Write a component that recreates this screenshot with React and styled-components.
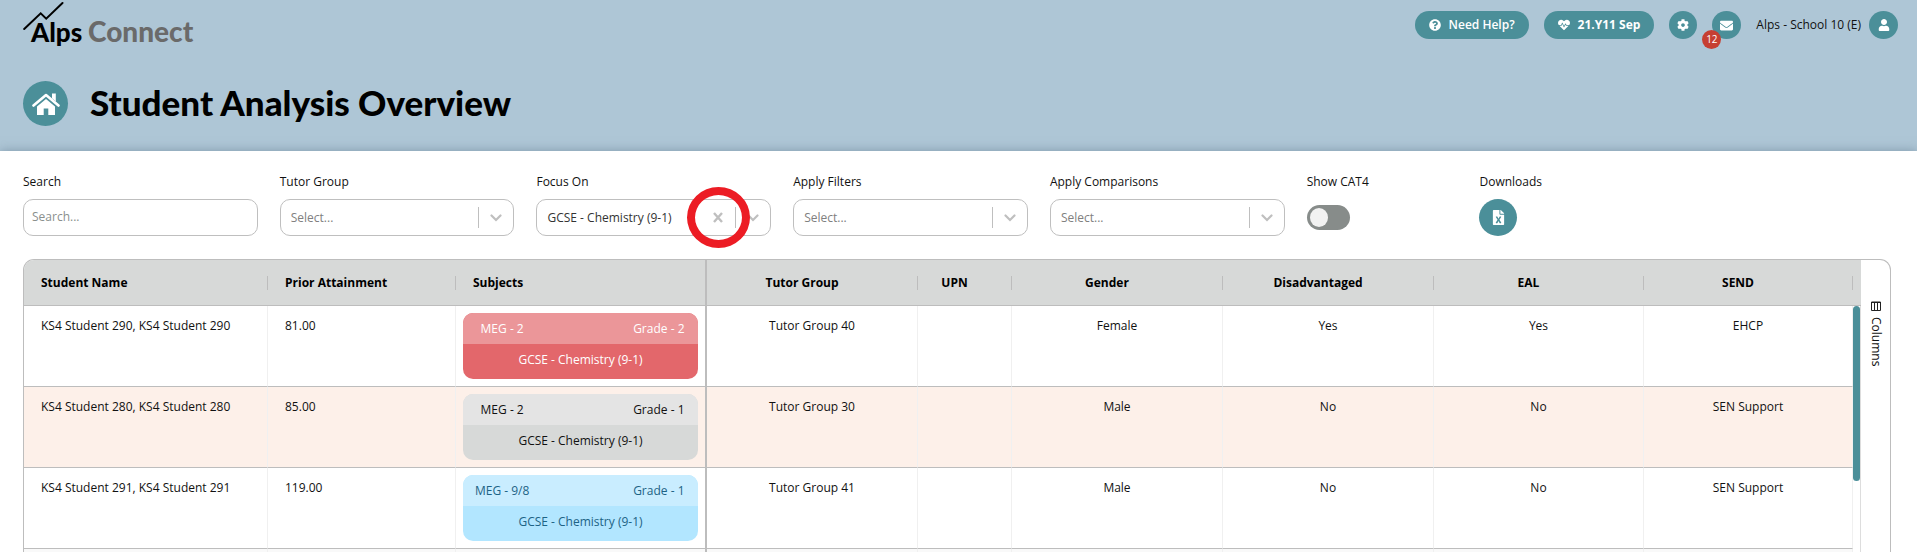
import React, { useState } from 'react';
import styled, { createGlobalStyle } from 'styled-components';
import {
    FaQuestionCircle,
    FaHeartbeat,
    FaCog,
    FaEnvelope,
    FaUser,
    FaFileExcel,
} from 'react-icons/fa';

const GlobalStyle = createGlobalStyle`
    * {
        box-sizing: border-box;
    }
    html {
        overflow: hidden;
    }
    body {
        margin: 0;
        background: #fff;
        color: #111;
        font-family: 'Open Sans', 'Noto Sans', sans-serif;
        font-size: 12px;
        line-height: 18px;
    }
    button, input, select {
        font: inherit;
        color: inherit;
    }
`;

const Header = styled.header`
    height: 151px;
    padding: 0 19px 0 23px;
    background: #aec6d6;
`;

const TopBar = styled.div`
    display: flex;
    justify-content: space-between;
    height: 50px;
`;

const LogoLink = styled.a`
    display: block;
    height: 50px;
`;

const TopActions = styled.nav`
    display: flex;
    align-items: center;
    gap: 15px;
    height: 28px;
    margin-top: 11px;
`;

const PillButton = styled.button`
    display: flex;
    align-items: center;
    gap: 8px;
    height: 28px;
    padding: 0 14px;
    border: none;
    border-radius: 14px;
    background: #4b8f99;
    color: #fff;
    font-weight: ${({ $bold }) => ($bold ? 700 : 600)};
    cursor: pointer;
`;

const RoundButton = styled.button`
    position: relative;
    display: flex;
    align-items: center;
    justify-content: center;
    flex-shrink: 0;
    width: ${({ $width }) => $width || 28}px;
    height: ${({ $height }) => $height || 28}px;
    padding: 0;
    border: none;
    border-radius: 50%;
    background: #4b8f99;
    color: #fff;
    cursor: pointer;
`;

const Badge = styled.span`
    position: absolute;
    top: 19px;
    left: -10px;
    width: 19px;
    height: 19px;
    border-radius: 50%;
    background: #c63f32;
    font-size: 10px;
    line-height: 18px;
    text-align: center;
`;

const Account = styled.div`
    display: flex;
    align-items: center;
    gap: 8px;
`;

const TitleRow = styled.div`
    display: flex;
    align-items: center;
    gap: 22px;
    margin-top: 31px;
`;

const HomeLink = styled.a`
    display: flex;
    align-items: center;
    justify-content: center;
    width: 45px;
    height: 45px;
    border-radius: 50%;
    background: #4b8f99;
`;

const Title = styled.h1`
    margin: 0;
    padding-bottom: 3px;
    color: #000;
    font-family: Futura, Lato, sans-serif;
    font-size: 35px;
    line-height: 42px;
    font-weight: 900;
`;

const Main = styled.main`
    padding: 22px 26px 0 23px;
    background: #fff;
    box-shadow: 0 0 10px rgba(80, 105, 125, 0.5);
`;

const Filters = styled.form`
    display: grid;
    grid-template-columns: repeat(5, minmax(0, 235fr)) 151fr 412fr;
    column-gap: 22px;
`;

const Field = styled.div`
    position: relative;
    display: flex;
    flex-direction: column;
    align-items: flex-start;
    gap: 8px;
    > label {
        height: 18px;
    }
`;

const SearchInput = styled.input`
    width: 100%;
    height: 37px;
    padding: 0 8px 2px;
    border: 1px solid #bfbfbf;
    border-radius: 10px;
    outline: none;
    &::placeholder {
        color: #8a8f8d;
        opacity: 1;
    }
`;

const SelectBox = styled.div`
    display: flex;
    align-items: center;
    width: 100%;
    height: 37px;
    border: 1px solid #bfbfbf;
    border-radius: 10px;
`;

const NativeSelect = styled.select`
    flex: 1;
    min-width: 0;
    height: 35px;
    padding: 0 0 0 10px;
    border: none;
    outline: none;
    background: transparent;
    color: ${({ $filled }) => ($filled ? '#333' : '#808080')};
    appearance: none;
`;

const ClearButton = styled.button`
    display: flex;
    justify-content: center;
    width: 35px;
    padding: 0;
    border: none;
    background: none;
    cursor: pointer;
`;

const Divider = styled.span`
    width: 1px;
    height: 21px;
    background: #bfbfbf;
`;

const Arrow = styled.span`
    display: flex;
    justify-content: center;
    width: 34px;
`;

const FocusRing = styled.span`
    position: absolute;
    top: 14px;
    right: 21px;
    width: 63px;
    height: 61px;
    border: 8px solid #ec1c24;
    border-radius: 50%;
    pointer-events: none;
`;

const ToggleInput = styled.input`
    appearance: none;
    display: flex;
    align-items: center;
    width: 43px;
    height: 25px;
    margin: 6px 0;
    padding: 0 3px;
    border-radius: 13px;
    background: #878c8a;
    cursor: pointer;
    &::before {
        content: '';
        width: 18px;
        height: 19px;
        border-radius: 50%;
        background: #f2f2f2;
    }
    &:checked {
        justify-content: flex-end;
        background: #4b8f99;
    }
`;

const Panel = styled.section`
    display: flex;
    margin-top: 23px;
    border: 1px solid #bdbdbd;
    border-bottom: none;
    border-radius: 11px 11px 0 0;
    overflow: hidden;
`;

const GridArea = styled.div`
    position: relative;
    flex: 1;
    min-width: 0;
`;

const Table = styled.table`
    width: 100%;
    table-layout: fixed;
    border-collapse: separate;
    border-spacing: 0;
`;

const Th = styled.th`
    height: 46px;
    padding: 0;
    border-bottom: 1px solid #bdbdbd;
    border-right: ${({ $pinEdge }) => ($pinEdge ? '2px solid #bdbdbd' : 'none')};
    background: #d7d9d8;
    color: #000;
    font-weight: 700;
    > div {
        height: 14px;
        line-height: 14px;
        padding: ${({ $left }) => ($left ? '0 0 0 17px' : '0 20px 0 0')};
        border-right: ${({ $pinEdge }) => ($pinEdge ? 'none' : '1px solid #bdbdbd')};
        text-align: ${({ $left }) => ($left ? 'left' : 'center')};
        white-space: nowrap;
    }
`;

const HeadGutter = styled.td`
    padding: 0;
    border-bottom: 1px solid #bdbdbd;
    background: #d7d9d8;
`;

const Row = styled.tr`
    background: ${({ $tint }) => $tint || '#fff'};
`;

const Td = styled.td`
    height: 81px;
    padding: ${({ $left }) => ($left ? '11px 0 0 17px' : '11px 0 0')};
    border-bottom: 1px solid #bdbdbd;
    border-right: 1px solid #f0f0f0;
    text-align: ${({ $left }) => ($left ? 'left' : 'center')};
    vertical-align: top;
    white-space: nowrap;
`;

const SubjectTd = styled(Td)`
    padding: 7px 7px 0;
    border-right: 2px solid #bdbdbd;
`;

const Gutter = styled.td`
    padding: 0;
    border-right: 1px solid #ddd;
    background: #fff;
`;

const SubjectCard = styled.div`
    border-radius: 10px;
    overflow: hidden;
    background: ${({ $tone }) => $tone.bottom};
    color: ${({ $tone }) => $tone.text};
    text-align: center;
`;

const CardTop = styled.div`
    display: grid;
    grid-template-columns: 1fr 1fr 1fr;
    height: 31px;
    line-height: 31px;
    background: ${({ $tone }) => $tone.top};
    > span:last-child {
        grid-column: 3;
    }
`;

const CardName = styled.div`
    height: 35px;
    line-height: 32px;
`;

const ScrollThumb = styled.div`
    position: absolute;
    top: 46px;
    right: 1px;
    width: 7px;
    height: 175px;
    border-radius: 4px;
    background: #4b8f99;
`;

const SideBar = styled.aside`
    width: 29px;
    padding-top: 41px;
`;

const ColumnsButton = styled.button`
    display: flex;
    align-items: center;
    gap: 6px;
    width: 29px;
    padding: 0;
    border: none;
    background: none;
    writing-mode: vertical-rl;
    cursor: pointer;
`;

const tones = {
    red: { top: '#eb9699', bottom: '#e3676b', text: '#fff' },
    grey: { top: '#e4e4e4', bottom: '#d7d9d8', text: '#111' },
    blue: { top: '#c9edff', bottom: '#b2e6ff', text: '#1d6385' },
};

const columns = [
    { label: 'Student Name', width: 244, left: true },
    { label: 'Prior Attainment', width: 188, left: true },
    { label: 'Subjects', width: 251, left: true, pinEdge: true },
    { label: 'Tutor Group', width: 211 },
    { label: 'UPN', width: 94 },
    { label: 'Gender', width: 211 },
    { label: 'Disadvantaged', width: 211 },
    { label: 'EAL', width: 210 },
    { label: 'SEND', width: 209 },
];

const gutterWidth = 8;
const totalWidth = columns.reduce((sum, column) => sum + column.width, gutterWidth);

const students = [
    {
        name: 'KS4 Student 290, KS4 Student 290',
        prior: '81.00',
        meg: '2',
        grade: '2',
        tone: tones.red,
        details: ['Tutor Group 40', '', 'Female', 'Yes', 'Yes', 'EHCP'],
    },
    {
        name: 'KS4 Student 280, KS4 Student 280',
        prior: '85.00',
        meg: '2',
        grade: '1',
        tone: tones.grey,
        tint: '#fdf0e9',
        details: ['Tutor Group 30', '', 'Male', 'No', 'No', 'SEN Support'],
    },
    {
        name: 'KS4 Student 291, KS4 Student 291',
        prior: '119.00',
        meg: '9/8',
        grade: '1',
        tone: tones.blue,
        details: ['Tutor Group 41', '', 'Male', 'No', 'No', 'SEN Support'],
    },
];

const Logo = () => (
    <svg width="180" height="50" viewBox="0 0 180 50" role="img" aria-label="Alps Connect">
        <path d="M1.2 29 17.7 13.3 23.2 18.6 39.5 3" fill="none" stroke="#000" strokeWidth="2" strokeLinecap="round" />
        <g fontFamily="Futura, Lato, sans-serif" fontWeight="900">
            <text x="8" y="42" fontSize="26" fill="#000">Alps</text>
            <text x="65" y="42" fontSize="28" fill="#6a6a6a">Connect</text>
        </g>
    </svg>
);

const HomeIcon = () => (
    <svg width="28" height="22" viewBox="0 0 28 22" aria-hidden="true">
        <path d="M1.500 12.500 14 2l12.500 10.500" fill="none" stroke="#fff" strokeWidth="2.600" strokeLinecap="round" strokeLinejoin="round" />
        <path d="M20 .500h3.800v8l-3.800-3.200z" fill="#fff" />
        <path d="M14 6 23 13.600V22h-6.700v-6.500h-4.600V22H5v-8.400z" fill="#fff" />
    </svg>
);

const ColumnsIcon = () => (
    <svg width="10" height="10" viewBox="0 0 10 10" aria-hidden="true">
        <path d="M.5 1h9v8.500h-9zM0 1.500h10M3.500 2v7.500M6.500 2v7.500" fill="none" stroke="#222" />
    </svg>
);

const SelectField = ({ id, label, options = [], clearable, children }) => {
    const [value, setValue] = useState(options[0] || '');

    return (
        <Field>
            <label htmlFor={id}>{label}</label>
            <SelectBox>
                <NativeSelect id={id} $filled={value !== ''} value={value} onChange={(e) => setValue(e.target.value)}>
                    <option value="">Select...</option>
                    {options.map((option) => (
                        <option key={option}>{option}</option>
                    ))}
                </NativeSelect>
                {clearable && value && (
                    <ClearButton type="button" aria-label="Clear" onClick={() => setValue('')}>
                        <svg width="10" height="11" viewBox="0 0 10 11">
                            <path d="M1 1 9 10M9 1 1 10" stroke="#bfbfbf" strokeWidth="2.400" />
                        </svg>
                    </ClearButton>
                )}
                <Divider />
                <Arrow>
                    <svg width="12" height="8" viewBox="0 0 12 8" aria-hidden="true">
                        <path d="M1.500 1.500 6 6l4.500-4.500" fill="none" stroke="#bfbfbf" strokeWidth="2.200" strokeLinecap="round" />
                    </svg>
                </Arrow>
            </SelectBox>
            {children}
        </Field>
    );
};

const StudentRow = ({ item }) => (
    <Row $tint={item.tint}>
        <Td $left>{item.name}</Td>
        <Td $left>{item.prior}</Td>
        <SubjectTd>
            <SubjectCard $tone={item.tone}>
                <CardTop $tone={item.tone}>
                    <span>MEG - {item.meg}</span>
                    <span>Grade - {item.grade}</span>
                </CardTop>
                <CardName>GCSE - Chemistry (9-1)</CardName>
            </SubjectCard>
        </SubjectTd>
        {item.details.map((detail, i) => (
            <Td key={i}>{detail}</Td>
        ))}
        <Gutter />
    </Row>
);

// placeholder row under the loaded ones
const EmptyRow = () => (
    <Row $tint="#f9f9f9">
        {columns.map(({ label, pinEdge }) => (pinEdge ? <SubjectTd key={label} /> : <Td key={label} />))}
        <Gutter />
    </Row>
);

const App = () => {
    return (
        <>
            <GlobalStyle />
            <Header>
                <TopBar>
                    <LogoLink href="#">
                        <Logo />
                    </LogoLink>
                    <TopActions>
                        <PillButton type="button">
                            <FaQuestionCircle size={12} />
                            Need Help?
                        </PillButton>
                        <PillButton type="button" $bold>
                            <FaHeartbeat size={12} />
                            21.Y11 Sep
                        </PillButton>
                        <RoundButton type="button" aria-label="Settings">
                            <FaCog size={12} />
                        </RoundButton>
                        <RoundButton type="button" aria-label="Messages" $width={29}>
                            <FaEnvelope size={13} />
                            <Badge>12</Badge>
                        </RoundButton>
                        <Account>
                            <span>Alps - School 10 (E)</span>
                            <RoundButton type="button" aria-label="Account" $width={29}>
                                <FaUser size={12} />
                            </RoundButton>
                        </Account>
                    </TopActions>
                </TopBar>
                <TitleRow>
                    <HomeLink href="#" aria-label="Home">
                        <HomeIcon />
                    </HomeLink>
                    <Title>Student Analysis Overview</Title>
                </TitleRow>
            </Header>
            <Main>
                <Filters>
                    <Field>
                        <label htmlFor="search">Search</label>
                        <SearchInput id="search" type="text" placeholder="Search..." />
                    </Field>
                    <SelectField id="tutor-group" label="Tutor Group" />
                    <SelectField id="focus-on" label="Focus On" options={['GCSE - Chemistry (9-1)']} clearable>
                        <FocusRing />
                    </SelectField>
                    <SelectField id="apply-filters" label="Apply Filters" />
                    <SelectField id="apply-comparisons" label="Apply Comparisons" />
                    <Field>
                        <label htmlFor="show-cat4">Show CAT4</label>
                        <ToggleInput id="show-cat4" type="checkbox" />
                    </Field>
                    <Field>
                        <label htmlFor="downloads">Downloads</label>
                        <RoundButton id="downloads" type="button" $width={38} $height={37}>
                            <FaFileExcel size={15} />
                        </RoundButton>
                    </Field>
                </Filters>
                <Panel>
                    <GridArea>
                        <Table>
                            <colgroup>
                                {columns.map(({ label, width }) => (
                                    <col key={label} style={{ width: `${(width / totalWidth) * 100}%` }} />
                                ))}
                                <col />
                            </colgroup>
                            <thead>
                                <tr>
                                    {columns.map(({ label, left, pinEdge }) => (
                                        <Th key={label} $left={left} $pinEdge={pinEdge}>
                                            <div>{label}</div>
                                        </Th>
                                    ))}
                                    <HeadGutter />
                                </tr>
                            </thead>
                            <tbody>
                                {students.map((item) => (
                                    <StudentRow key={item.name} item={item} />
                                ))}
                                <EmptyRow />
                            </tbody>
                        </Table>
                        <ScrollThumb />
                    </GridArea>
                    <SideBar>
                        <ColumnsButton type="button">
                            <ColumnsIcon />
                            Columns
                        </ColumnsButton>
                    </SideBar>
                </Panel>
            </Main>
        </>
    );
};

export default App;
